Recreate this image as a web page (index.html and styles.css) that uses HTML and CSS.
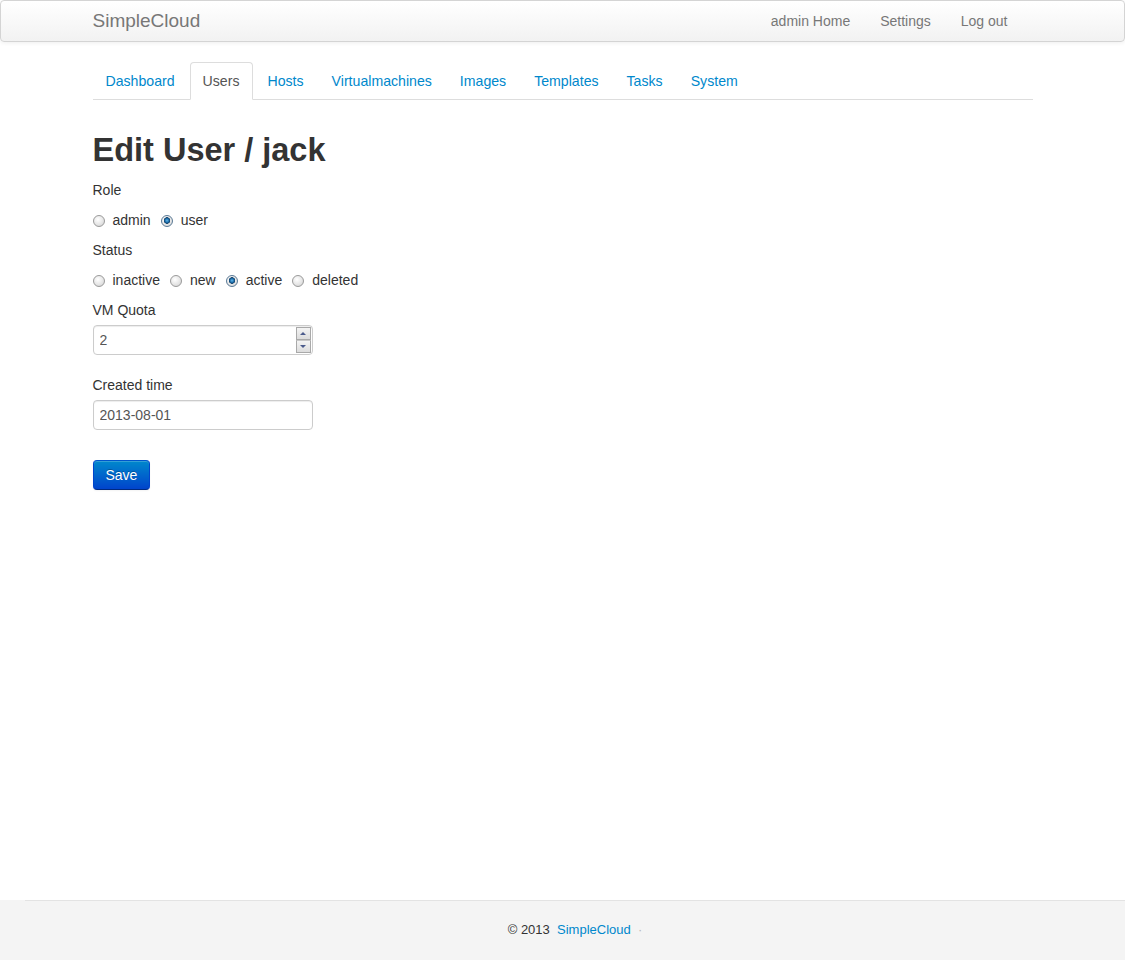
FILE: index.html
```html
<!DOCTYPE html>
<html>
<head>
<meta charset="utf-8">
<title>SimpleCloud</title>
<link rel="stylesheet" href="styles.css">
</head>
<body>
<div class="page">
  <div class="navbar">
    <div class="container navbar-inner">
      <a class="brand" href="#">SimpleCloud</a>
      <ul class="nav">
        <li><a href="#">admin Home</a></li>
        <li><a href="#">Settings</a></li>
        <li><a href="#">Log out</a></li>
      </ul>
    </div>
  </div>

  <div class="container main">
    <ul class="tabs">
      <li><a href="#">Dashboard</a></li>
      <li class="active"><a href="#">Users</a></li>
      <li><a href="#">Hosts</a></li>
      <li><a href="#">Virtualmachines</a></li>
      <li><a href="#">Images</a></li>
      <li><a href="#">Templates</a></li>
      <li><a href="#">Tasks</a></li>
      <li><a href="#">System</a></li>
    </ul>

    <h1 class="title">Edit User / jack</h1>

    <form class="form">
      <div class="label">Role</div>
      <div class="radios">
        <label class="radio"><input type="radio" name="role"> admin</label>
        <label class="radio"><input type="radio" name="role" checked> user</label>
      </div>

      <div class="label">Status</div>
      <div class="radios">
        <label class="radio"><input type="radio" name="status"> inactive</label>
        <label class="radio"><input type="radio" name="status"> new</label>
        <label class="radio"><input type="radio" name="status" checked> active</label>
        <label class="radio"><input type="radio" name="status"> deleted</label>
      </div>

      <div class="label">VM Quota</div>
      <div class="field spin-field">
        <input class="input" type="text" value="2">
        <span class="spinner">
          <span class="spin-btn"><span class="tri up"></span></span>
          <span class="spin-btn"><span class="tri down"></span></span>
        </span>
      </div>

      <div class="label">Created time</div>
      <div class="field">
        <input class="input" type="text" value="2013-08-01">
      </div>

      <div class="actions">
        <button type="button" class="btn">Save</button>
      </div>
    </form>
  </div>

  <div class="footer">
    <div class="footer-line"></div>
    <p class="footer-text">© 2013 &nbsp;<a href="#">SimpleCloud</a> &nbsp;<span class="dot">·</span></p>
  </div>
</div>
</body>
</html>
```

FILE: styles.css
```css
* { box-sizing: border-box; }

html, body {
  margin: 0;
  padding: 0;
}

body {
  font-family: "Liberation Sans", Arial, sans-serif;
  font-size: 14px;
  line-height: 20px;
  color: #333;
  background: #fff;
}

a { color: #0088cc; text-decoration: none; }

.page {
  min-height: 960px;
  display: flex;
  flex-direction: column;
}

.container {
  width: 940px;
  margin: 0 auto;
}

/* navbar */
.navbar {
  height: 42px;
  border: 1px solid #d4d4d4;
  border-radius: 4px;
  background: linear-gradient(to bottom, #ffffff, #f2f2f2);
  box-shadow: 0 1px 4px rgba(0, 0, 0, 0.065);
}

.navbar-inner {
  display: flex;
  justify-content: space-between;
  align-items: center;
  height: 40px;
}

.brand {
  font-size: 19px;
  color: #777;
  line-height: 20px;
  padding: 10px 0;
}

.nav {
  list-style: none;
  margin: 0 10px 0 0;
  padding: 0;
  display: flex;
}

.nav a {
  display: block;
  padding: 10px 15px;
  color: #777;
}

/* tabs */
.main {
  flex: 1;
  padding-top: 20px;
}

.tabs {
  list-style: none;
  margin: 0 0 30px;
  padding: 0;
  display: flex;
  border-bottom: 1px solid #ddd;
}

.tabs li {
  margin-right: 2px;
  margin-bottom: -1px;
}

.tabs a {
  display: block;
  padding: 8px 12px;
  font-size: 14.13px;
  line-height: 20px;
  border: 1px solid transparent;
  border-radius: 4px 4px 0 0;
}

.tabs .active a {
  color: #555;
  background: #fff;
  border-color: #ddd #ddd transparent;
}

.title {
  font-size: 32.5px;
  line-height: 40px;
  font-weight: bold;
  margin: 0 0 10px;
  color: #333;
}

/* form */
.label {
  line-height: 20px;
  margin-bottom: 5px;
}

.radios {
  display: flex;
  gap: 10px;
  padding-top: 5px;
  margin-bottom: 10px;
}

.radio {
  display: flex;
  align-items: center;
  gap: 8px;
  line-height: 20px;
  color: #333;
}

.radio input {
  appearance: none;
  -webkit-appearance: none;
  width: 12px;
  height: 12px;
  margin: 0;
  border-radius: 50%;
  border: 1px solid #9a9a9a;
  background: radial-gradient(circle at 40% 35%, #ffffff 0%, #e6e6e6 55%, #cfcfcf 100%);
  position: relative;
  top: 1px;
}

.radio input:checked {
  border-color: #5a7a96;
  background:
    radial-gradient(circle at 50% 45%, #5fb8ec 0, #1b6aa6 2px, #0f3e66 3px, transparent 3.5px),
    radial-gradient(circle at 40% 35%, #ffffff 0%, #e6e6e6 55%, #cfcfcf 100%);
}

.field {
  width: 220px;
  margin-bottom: 20px;
}

.spin-field {
  position: relative;
}

.input {
  display: block;
  width: 220px;
  height: 30px;
  padding: 4px 6px;
  font-family: "Liberation Sans", Arial, sans-serif;
  font-size: 14px;
  line-height: 20px;
  color: #555;
  border: 1px solid #ccc;
  border-radius: 4px;
  box-shadow: inset 0 1px 1px rgba(0, 0, 0, 0.075);
  background: #fff;
  outline: none;
}

.spinner {
  position: absolute;
  right: 2px;
  top: 2px;
  width: 15px;
  height: 26px;
  display: flex;
  flex-direction: column;
}

.spin-btn {
  flex: 1;
  display: flex;
  align-items: center;
  justify-content: center;
  border: 1px solid #a9a9a9;
  background: linear-gradient(to bottom, #f4f4f4, #dcdcdc);
}

.spin-btn + .spin-btn {
  border-top: 1px solid #c8c8c8;
}

.tri {
  width: 0;
  height: 0;
  border-left: 3px solid transparent;
  border-right: 3px solid transparent;
}

.tri.up { border-bottom: 3px solid #4b5b8c; }
.tri.down { border-top: 3px solid #4b5b8c; }

.actions {
  padding-top: 10px;
}

.btn {
  font-family: "Liberation Sans", Arial, sans-serif;
  font-size: 14px;
  line-height: 20px;
  height: 30px;
  padding: 4px 12px;
  color: #fff;
  border: 1px solid #0044cc;
  border-color: #0055cc #0044cc #002a80;
  border-radius: 4px;
  background: linear-gradient(to bottom, #0088cc, #0044cc);
  box-shadow: inset 0 1px 0 rgba(255, 255, 255, 0.2), 0 1px 2px rgba(0, 0, 0, 0.05);
  text-shadow: 0 -1px 0 rgba(0, 0, 0, 0.25);
  cursor: pointer;
}

/* footer */
.footer {
  height: 60px;
  background: #f4f4f4;
}

.footer-line {
  margin-left: 25px;
  border-top: 1px solid #e3e3e3;
}

.footer-text {
  margin: 0;
  padding-top: 19px;
  padding-left: 25px;
  text-align: center;
  font-size: 13px;
  line-height: 20px;
  color: #333;
}

.footer-text .dot {
  color: #bbb;
}
```
